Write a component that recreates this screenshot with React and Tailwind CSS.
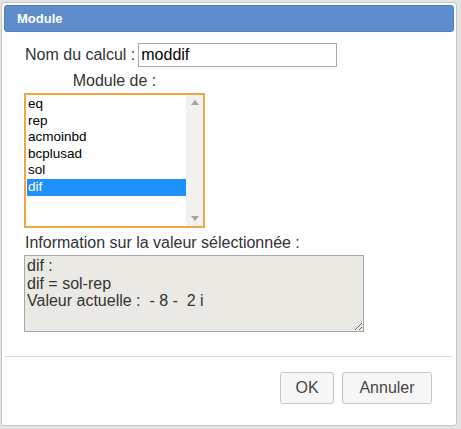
import React from 'react';

const items = ["eq", "rep", "acmoinbd", "bcplusad", "sol", "dif"];

export default function App() {
  const selected = "dif";

  return (
    <div className="w-[461px] h-[429px] bg-[#e4e4e4] pt-[2px] pl-[1px] font-['Liberation_Sans',Arial,sans-serif] text-[#333]">
      <div className="w-[456px] h-[424px] bg-white border border-[#c5c5c5] rounded-[3px] p-[2px] flex flex-col">
        {/* Titre */}
        <div className="h-[27px] bg-[#5f8dcb] border border-[#4c7fc4] rounded-[3px] flex items-center pl-[12px]">
          <span className="text-white font-bold text-[13px]">Module</span>
        </div>

        <div className="pl-[20px] pt-[11px]">
          {/* Nom du calcul */}
          <div className="flex items-center h-[24px]">
            <span className="text-[16px] leading-[18px] pl-[1px] mr-[3px]">Nom du calcul :</span>
            <input
              readOnly
              value="moddif"
              className="w-[199px] h-[24px] border border-[#a9a9a9] px-[2px] text-[16px] text-black outline-none font-['Liberation_Sans',Arial,sans-serif]"
            />
          </div>

          {/* Liste */}
          <div className="w-[181px] text-center text-[16px] leading-[18px] mt-[5px] mb-[3px]">Module de :</div>
          <div className="w-[181px] h-[135px] border-2 border-[#eaa846] flex">
            <div className="flex-1 pt-[1px] pl-[1px]">
              {items.map((it) => (
                <div
                  key={it}
                  className={
                    "h-[16.6px] leading-[16.6px] text-[13.5px] pl-[1px] " +
                    (it === selected ? "bg-[#1e90ff] text-white" : "text-black")
                  }
                >
                  {it}
                </div>
              ))}
            </div>
            <div className="w-[17px] bg-[#f1f1f1] flex flex-col justify-between items-center py-[5px]">
              <svg width="8" height="5" viewBox="0 0 8 5"><polygon points="0,5 8,5 4,0" fill="#a3a3a3" /></svg>
              <svg width="8" height="5" viewBox="0 0 8 5"><polygon points="0,0 8,0 4,5" fill="#a3a3a3" /></svg>
            </div>
          </div>

          {/* Information */}
          <div className="text-[16px] leading-[18px] pl-[1px] mt-[6px] mb-[3px]">Information sur la valeur sélectionnée :</div>
          <textarea
            readOnly
            value={"dif :\ndif = sol-rep\nValeur actuelle :  - 8 -  2 i"}
            className="block w-[340px] h-[77px] bg-[#ebe9e4] border border-[#a6a6a6] px-[2px] pt-[1px] text-[16px] leading-[17.5px] text-[#333] outline-none font-['Liberation_Sans',Arial,sans-serif]"
          />
        </div>

        {/* Séparateur */}
        <div className="mt-[24px] mx-[1px] border-t border-[#dddddd]"></div>

        {/* Boutons */}
        <div className="flex justify-end gap-[8px] pr-[22px] pt-[15px]">
          <button className="w-[54px] h-[32px] bg-[#f6f6f6] border border-[#c5c5c5] rounded-[3px] text-[16px] text-[#454545]">OK</button>
          <button className="w-[90px] h-[32px] bg-[#f6f6f6] border border-[#c5c5c5] rounded-[3px] text-[16px] text-[#454545]">Annuler</button>
        </div>
      </div>
    </div>
  );
}
